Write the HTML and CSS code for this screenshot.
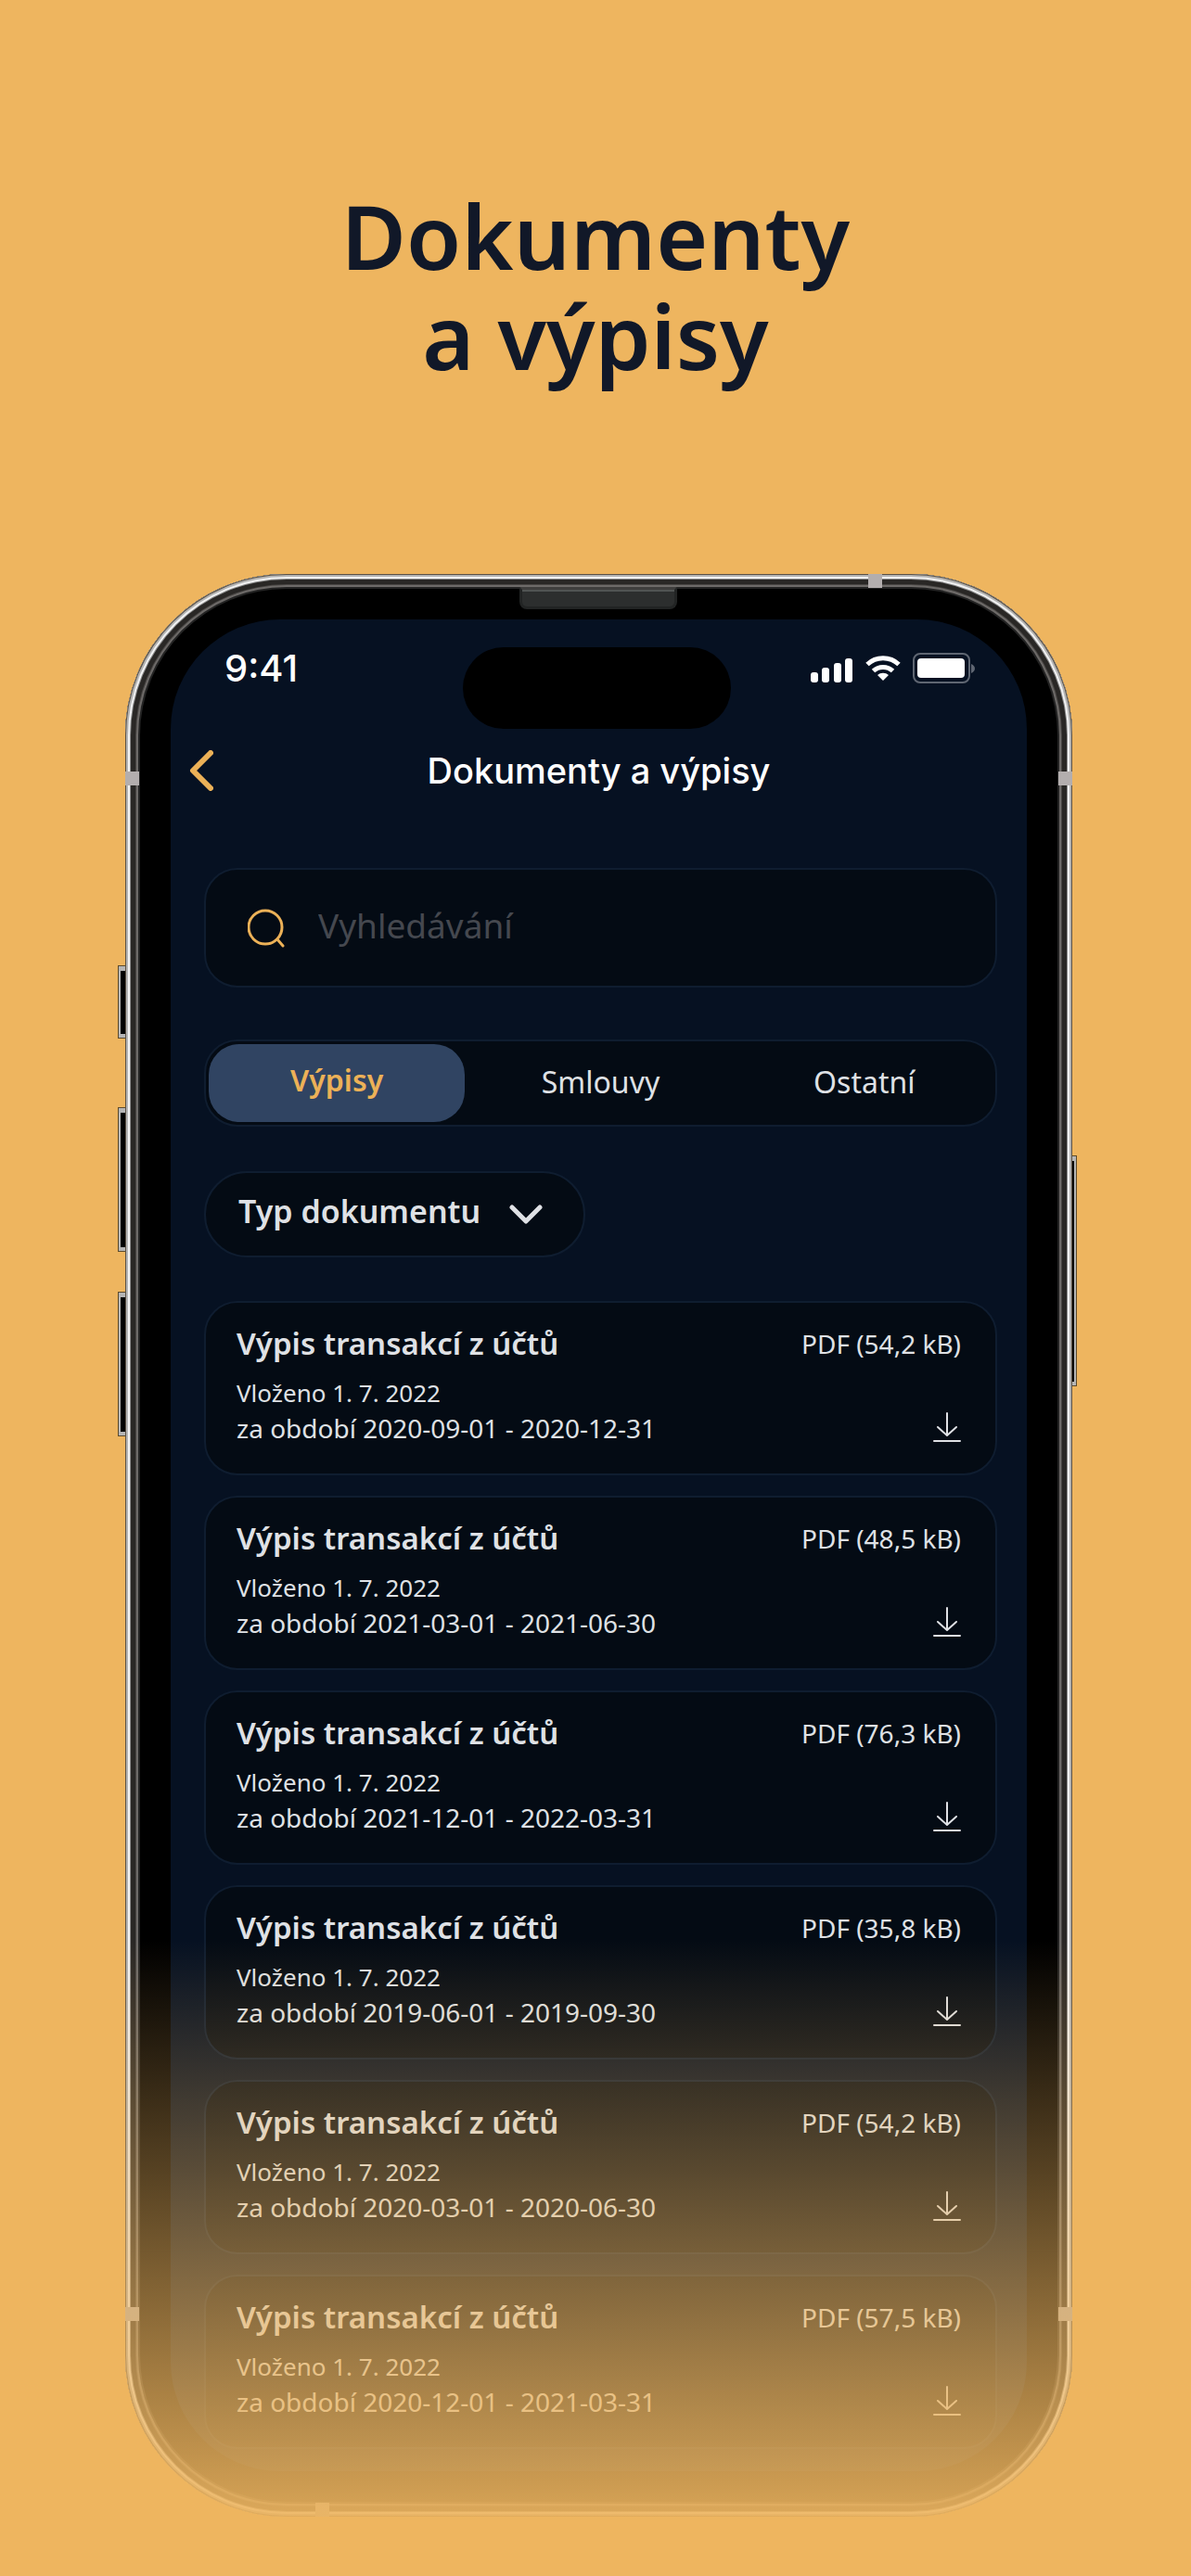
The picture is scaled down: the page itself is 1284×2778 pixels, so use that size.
FILE: index.html
```html
<!DOCTYPE html>
<html lang="cs">
<head>
<meta charset="utf-8">
<meta name="viewport" content="width=device-width, initial-scale=1">
<title>Dokumenty a výpisy</title>
<link rel="stylesheet" href="styles.css">
</head>
<body>
<svg class="sprite" aria-hidden="true">
  <symbol id="download" viewBox="0 0 30 36">
    <path d="M15 2v23M5 17l10 9 10-9M1 32h28" fill="none" stroke="currentColor" stroke-width="2" stroke-linecap="round" stroke-linejoin="round"/>
  </symbol>
</svg>
<main class="page">
  <h1 class="headline">Dokumenty<br>a výpisy</h1>

  <div class="phone">
    <span class="key key-mute"></span>
    <span class="key key-up"></span>
    <span class="key key-down"></span>
    <span class="key key-power"></span>
    <div class="bezel">
      <span class="speaker"></span>
      <span class="band band-top"></span>
      <span class="band band-bottom"></span>
      <span class="band band-left band-high"></span>
      <span class="band band-right band-high"></span>
      <span class="band band-left band-low"></span>
      <span class="band band-right band-low"></span>

      <div class="screen">
        <div class="status">
          <span class="time">9:41</span>
          <span class="island"></span>
          <div class="indicators">
            <svg class="signal" viewBox="0 0 46 26" aria-hidden="true">
              <g fill="#fff">
                <rect x="0" y="15" width="8" height="11" rx="3"/>
                <rect x="12" y="10" width="8" height="16" rx="3"/>
                <rect x="25" y="5" width="8" height="21" rx="3"/>
                <rect x="37" y="0" width="8" height="26" rx="3"/>
              </g>
            </svg>
            <svg class="wifi" viewBox="0 0 38 27" aria-hidden="true">
              <g fill="none" stroke="#fff" stroke-width="5">
                <path d="M2 9.500A25 25 0 0 1 36 9.500"/>
                <path d="M8.500 16.500A15.500 15.500 0 0 1 29.500 16.500"/>
              </g>
              <path d="M19 27l-6-6a9 9 0 0 1 12 0z" fill="#fff"/>
            </svg>
            <svg class="battery" viewBox="0 0 67 33" aria-hidden="true">
              <rect x="1" y="1" width="60" height="31" rx="7" fill="none" stroke="#5f6672" stroke-width="2"/>
              <rect x="5" y="6" width="51" height="21" rx="4" fill="#fff"/>
              <path d="M63 12q4 2 4 5t-4 5z" fill="#5f6672"/>
            </svg>
          </div>
        </div>

        <header class="nav">
          <button class="back" type="button" aria-label="Zpět">
            <svg viewBox="0 0 26 44" aria-hidden="true"><path d="M23 3L4 22l19 19" fill="none" stroke="currentColor" stroke-width="6" stroke-linecap="round" stroke-linejoin="round"/></svg>
          </button>
          <h2 class="nav-title">Dokumenty a výpisy</h2>
        </header>

        <div class="content">
          <label class="search">
            <svg viewBox="0 0 40 42" aria-hidden="true"><g fill="none" stroke="currentColor" stroke-width="3" stroke-linecap="round"><ellipse cx="19" cy="20" rx="18" ry="18"/><path d="M32 33l6 7"/></g></svg>
            <input type="search" placeholder="Vyhledávání" aria-label="Vyhledávání">
          </label>

          <div class="tabs" role="tablist">
            <button class="tab tab-active" type="button" role="tab" aria-selected="true">Výpisy</button>
            <button class="tab" type="button" role="tab" aria-selected="false">Smlouvy</button>
            <button class="tab" type="button" role="tab" aria-selected="false">Ostatní</button>
          </div>

          <label class="filter">
            <select aria-label="Typ dokumentu"><option>Typ dokumentu</option></select>
            <svg viewBox="0 0 36 24" aria-hidden="true"><path d="M3 4l15 15L33 4" fill="none" stroke="currentColor" stroke-width="5" stroke-linecap="round" stroke-linejoin="round"/></svg>
          </label>

          <ul class="documents">
            <li class="document">
              <div class="info"><h3>Výpis transakcí z účtů</h3><p class="added">Vloženo 1. 7. 2022</p><p class="period">za období 2020-09-01 - 2020-12-31</p></div>
              <div class="file"><span>PDF (54,2 kB)</span><button type="button" aria-label="Stáhnout"><svg aria-hidden="true"><use href="#download"/></svg></button></div>
            </li>
            <li class="document">
              <div class="info"><h3>Výpis transakcí z účtů</h3><p class="added">Vloženo 1. 7. 2022</p><p class="period">za období 2021-03-01 - 2021-06-30</p></div>
              <div class="file"><span>PDF (48,5 kB)</span><button type="button" aria-label="Stáhnout"><svg aria-hidden="true"><use href="#download"/></svg></button></div>
            </li>
            <li class="document">
              <div class="info"><h3>Výpis transakcí z účtů</h3><p class="added">Vloženo 1. 7. 2022</p><p class="period">za období 2021-12-01 - 2022-03-31</p></div>
              <div class="file"><span>PDF (76,3 kB)</span><button type="button" aria-label="Stáhnout"><svg aria-hidden="true"><use href="#download"/></svg></button></div>
            </li>
            <li class="document">
              <div class="info"><h3>Výpis transakcí z účtů</h3><p class="added">Vloženo 1. 7. 2022</p><p class="period">za období 2019-06-01 - 2019-09-30</p></div>
              <div class="file"><span>PDF (35,8 kB)</span><button type="button" aria-label="Stáhnout"><svg aria-hidden="true"><use href="#download"/></svg></button></div>
            </li>
            <li class="document">
              <div class="info"><h3>Výpis transakcí z účtů</h3><p class="added">Vloženo 1. 7. 2022</p><p class="period">za období 2020-03-01 - 2020-06-30</p></div>
              <div class="file"><span>PDF (54,2 kB)</span><button type="button" aria-label="Stáhnout"><svg aria-hidden="true"><use href="#download"/></svg></button></div>
            </li>
            <li class="document">
              <div class="info"><h3>Výpis transakcí z účtů</h3><p class="added">Vloženo 1. 7. 2022</p><p class="period">za období 2020-12-01 - 2021-03-31</p></div>
              <div class="file"><span>PDF (57,5 kB)</span><button type="button" aria-label="Stáhnout"><svg aria-hidden="true"><use href="#download"/></svg></button></div>
            </li>
          </ul>
        </div>
      </div>
    </div>
  </div>
  <div class="fade"></div>
</main>
</body>
</html>
```
FILE: styles.css
```css
:root {
  --sand: #eeb55f;
  --gold: #ecb157;
  --ink: #111828;
  --navy: #061122;
  --panel: #040b14;
  --line: #0f1d30;
  --text: #dfe1e5;
}

* { box-sizing: border-box; }

body {
  margin: 0;
  background: var(--sand);
  font-family: "Noto Sans", "Open Sans", sans-serif;
  color: var(--text);
}

h1, h2, h3, p, ul { margin: 0; padding: 0; }
ul { list-style: none; }
button, input, select { font: inherit; color: inherit; background: none; border: 0; margin: 0; padding: 0; }
button { cursor: pointer; }
svg { display: block; flex: none; }
.sprite { position: absolute; width: 0; height: 0; }

.page {
  position: relative;
  display: flex;
  flex-direction: column;
  gap: 203px;
  padding: 200px 0 63px;
}

.headline {
  text-align: center;
  font-size: 96px;
  line-height: 108px;
  font-weight: 600;
  color: var(--ink);
}

/* Device */
.phone { position: relative; margin: 0 128px 0 135px; }

.bezel {
  position: relative;
  padding: 49px;
  border-radius: 174px;
  background: #000;
  box-shadow:
    inset 0 0 0 1px #5b5144,
    inset 0 0 0 3px #b4b4b4,
    inset 0 0 0 5px #f2f2f2,
    inset 0 0 0 6px #8c8c8c,
    inset 0 0 0 11px #292725,
    inset 0 0 0 12px #4a4745,
    inset 0 0 0 14px #6d6a68,
    inset 0 0 0 16px #232323;
}

.key {
  position: absolute;
  left: -7px;
  width: 9px;
  background: #000;
  border: 2px solid #b5b5b5;
  border-width: 5px 0 4px 2px;
  box-shadow: 0 0 0 1px #5b4a2c;
}
.key-mute { top: 423px; height: 77px; }
.key-up { top: 576px; height: 154px; }
.key-down { top: 775px; height: 154px; }
.key-power { left: auto; right: -4px; top: 628px; height: 247px; border-width: 5px 2px 4px 0; }

.band { position: absolute; width: 15px; height: 15px; background: #b3aeae; }
.band-top { top: 0; left: 801px; }
.band-bottom { bottom: 0; left: 205px; }
.band-left { left: 0; }
.band-right { right: 0; }
.band-high { top: 213px; }
.band-low { bottom: 211px; }

.speaker {
  position: absolute;
  top: 14px;
  left: 50%;
  width: 170px;
  height: 24px;
  margin-left: -86px;
  border: 3px solid #222424;
  border-top-color: #3f3e3d;
  border-radius: 2px 2px 8px 8px;
  background: #2c2e2e;
  box-shadow: inset 0 2px 0 #505453;
}

.screen {
  padding: 30px 0 24px;
  border-radius: 118px;
  background: var(--navy);
}

/* Status bar */
.status {
  display: grid;
  grid-template-columns: 1fr 289px 1fr;
  align-items: start;
  padding: 0 56px 0 52px;
}
.time {
  padding-left: 6px;
  font: 500 40px/46px Inter, sans-serif;
  color: #fff;
}
.island { height: 88px; border-radius: 44px; background: #000; }
.indicators {
  display: flex;
  justify-content: flex-end;
  align-items: center;
  gap: 13px;
  padding-top: 6px;
}
.signal { width: 46px; height: 26px; margin-top: 4px; }
.wifi { width: 38px; height: 27px; }
.battery { width: 67px; height: 33px; }

/* Title bar */
.nav {
  display: grid;
  grid-template-columns: 1fr auto 1fr;
  align-items: center;
  margin-top: 21px;
  padding: 0 20px;
}
.back { justify-self: start; color: var(--gold); }
.back svg { width: 26px; height: 44px; }
.nav-title { font: 500 38px/48px Inter, sans-serif; color: #fff; }

.content {
  display: flex;
  flex-direction: column;
  align-items: stretch;
  gap: 48px;
  padding: 81px 32px 0 36px;
}

.search, .tabs, .filter, .document {
  display: flex;
  border: 2px solid var(--line);
  background: var(--panel);
}

.search {
  align-items: center;
  gap: 36px;
  height: 129px;
  margin-bottom: 8px;
  padding: 0 45px;
  border-radius: 36px;
}
.search svg { width: 40px; height: 42px; color: var(--gold); }
.search input { flex: 1; min-width: 0; padding-bottom: 6px; font-size: 37px; outline: 0; appearance: none; }
.search input::placeholder { color: #45484f; opacity: 1; }

.tabs { gap: 8px; height: 94px; padding: 3px; border-radius: 36px; }
.tab { flex: 1; padding-bottom: 4px; border-radius: 33px; font-size: 32px; }
.tab-active { padding-bottom: 8px; background: #304462; color: var(--gold); font-weight: 600; }

.filter {
  align-self: flex-start;
  align-items: center;
  gap: 30px;
  height: 93px;
  padding: 0 44px 0 35px;
  border-radius: 46px;
}
.filter select { appearance: none; padding-bottom: 8px; font-size: 34px; font-weight: 600; outline: 0; }
.filter svg { width: 36px; height: 24px; pointer-events: none; }

/* Document list */
.documents { display: flex; flex-direction: column; gap: 22px; margin-top: -1px; }
.document {
  justify-content: space-between;
  padding: 22px 37px 30px 33px;
  border-radius: 36px;
}
.info h3 { font-size: 33px; line-height: 44px; font-weight: 600; margin-bottom: 12px; }
.info p { line-height: 38px; font-size: 28px; }
.info .added { font-size: 26px; }
.file {
  display: flex;
  flex-direction: column;
  justify-content: space-between;
  align-items: flex-end;
  padding-bottom: 1px;
  font-size: 28px;
  line-height: 44px;
}
.file svg { width: 30px; height: 36px; }

/* Lower part dissolves into the background */
.fade {
  position: absolute;
  inset: auto 0 0;
  height: 684px;
  background: linear-gradient(rgba(238, 181, 95, 0), var(--sand));
  pointer-events: none;
}
```
